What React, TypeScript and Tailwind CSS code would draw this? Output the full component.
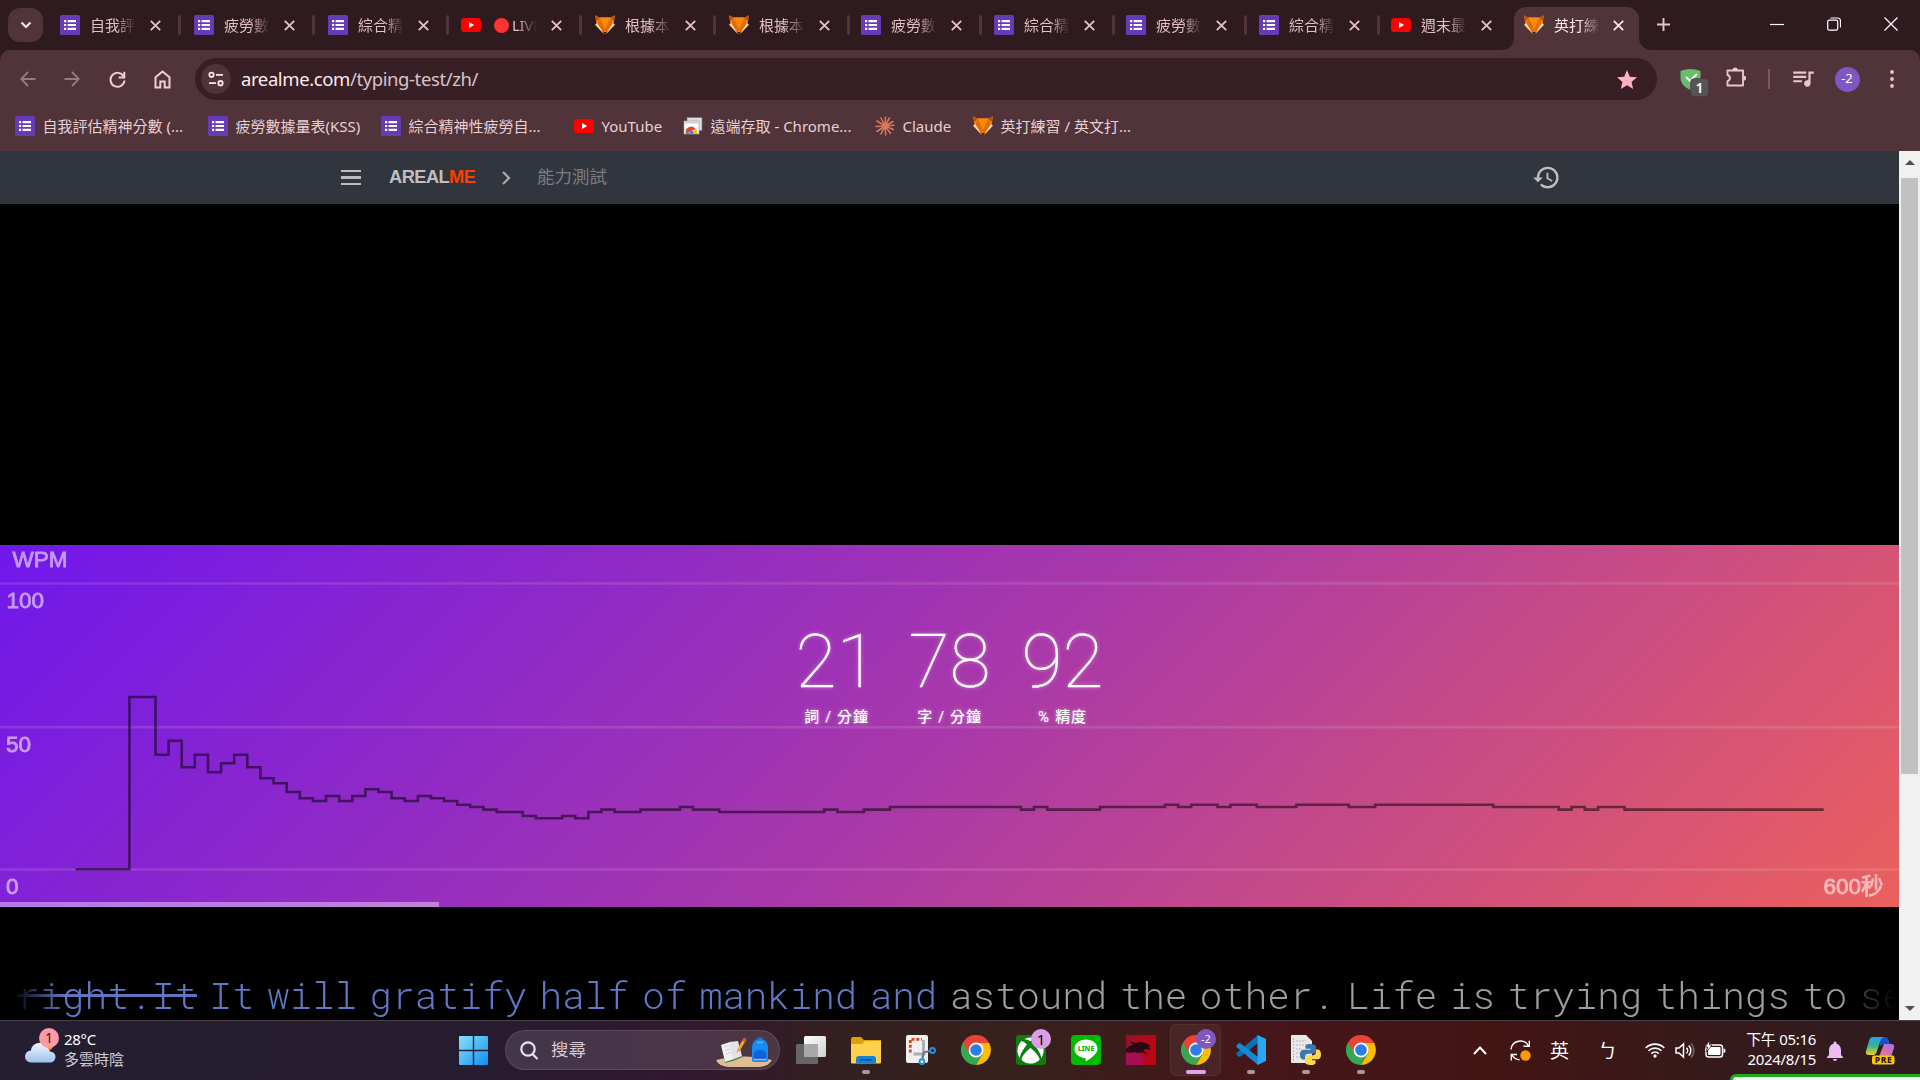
import React from "react";
import { MdHistory, MdQueueMusic, MdStar, MdNotifications } from "react-icons/md";
import { FaXbox } from "react-icons/fa";

const UI = "font-['Noto_Sans','Noto_Sans_CJK_TC',sans-serif]";

type FavKind = "form" | "yt" | "fox" | "remote" | "claude";

function Favicon({ kind }: { kind: FavKind }) {
  if (kind === "form")
    return (
      <svg viewBox="0 0 20 20" className="h-5 w-5 shrink-0">
        <rect width="20" height="20" rx="1.5" fill="#673ab7" />
        <path d="M4 5h2.2v2.2H4zM4 8.9h2.2v2.2H4zM4 12.8h2.2V15H4zM7.6 5H16v2.2H7.6zM7.6 8.9H16v2.2H7.6zM7.6 12.8H16V15H7.6z" fill="#fff" />
      </svg>
    );
  if (kind === "yt")
    return (
      <svg viewBox="0 0 20 20" className="h-5 w-5 shrink-0">
        <rect y="3" width="20" height="14" rx="3.6" fill="#f00" />
        <path d="M8 7l5.2 3L8 13z" fill="#fff" />
      </svg>
    );
  if (kind === "fox")
    return (
      <svg viewBox="0 0 20 20" className="h-5 w-5 shrink-0">
        <path d="M0 .3 4.500 2.500h11L20 .3l-1.500 9.200L10 19.500 1.500 9.500z" fill="#f07c10" />
        <path d="M0 .3 4.500 2.500 1.500 6zM20 .3l-4.500 2.200 3 3.500z" fill="#b9501a" />
        <path d="M4.500 2.500h11L13 11l-3 4-3-4z" fill="#ff8a00" />
        <path d="M0 9.800 2.800 7.500l6 11.500zM20 9.800l-2.800-2.300-6 11.500z" fill="#ffd9a0" />
        <path d="M4.500 2.500 2.500 8.500 9 18.500l1-4.500zM15.500 2.500l2 6-6.500 10-1-4.500z" fill="#e06c08" />
        <path d="m8.300 17 1.700 2.800 1.700-2.800z" fill="#3a1a10" />
      </svg>
    );
  if (kind === "remote")
    return (
      <svg viewBox="0 0 20 20" className="h-5 w-5 shrink-0">
        <rect x="4" y="1.500" width="15" height="13" fill="#ddd" stroke="#777" strokeWidth=".6" />
        <rect x="1" y="5" width="15" height="13" fill="#fff" stroke="#999" strokeWidth=".6" />
        <rect x="1" y="5" width="15" height="2.500" fill="#cfd2d6" />
        <path d="M3 18a5.500 5.500 0 0 1 9.700-5L8.500 15z" fill="#ea4335" />
        <path d="M12.500 12.600A5.500 5.500 0 0 1 14 18H9z" fill="#fbbc05" />
        <path d="M3.400 14.500 7 18H3z" fill="#34a853" />
        <circle cx="8.500" cy="16.600" r="2" fill="#4285f4" />
      </svg>
    );
  return (
    <svg viewBox="0 0 20 20" className="h-5 w-5 shrink-0" stroke="#d97757" strokeWidth="1.600" strokeLinecap="round">
      <path d="M10 10 10.500 1M10 10 14.500 2M10 10 18 5.500M10 10 19 9.300M10 10 18.300 13.500M10 10 15.500 17.500M10 10 10.700 19M10 10 6 18M10 10 2 15.500M10 10 1 10.500M10 10 2 5M10 10 6 2" />
    </svg>
  );
}

function CloseX({ color }: { color: string }) {
  return (
    <svg viewBox="0 0 11 11" className="h-[11px] w-[11px] shrink-0">
      <path d="M.8.8l9.400 9.400M10.200.8.8 10.200" stroke={color} strokeWidth="1.900" />
    </svg>
  );
}

const TABS: { k: FavKind; t: string; w: string; live?: boolean; sep?: boolean }[] = [
  { k: "form", t: "自我評", w: "w-[134px]" },
  { k: "form", t: "疲勞數", w: "w-[134px]" },
  { k: "form", t: "綜合精", w: "w-[133px]" },
  { k: "yt", t: "LIVE", w: "w-[134px]", live: true },
  { k: "fox", t: "根據本", w: "w-[134px]" },
  { k: "fox", t: "根據本", w: "w-[132px]" },
  { k: "form", t: "疲勞數", w: "w-[133px]" },
  { k: "form", t: "綜合精", w: "w-[132px]" },
  { k: "form", t: "疲勞數", w: "w-[133px]" },
  { k: "form", t: "綜合精", w: "w-[132px]" },
  { k: "yt", t: "週末最", w: "w-[123px]", sep: false },
];

function TabLabel({ text, live, active }: { text: string; live?: boolean; active?: boolean }) {
  return (
    <span
      className={
        "ml-[10px] flex w-[45px] items-center overflow-hidden text-[15px] leading-5 whitespace-nowrap [mask-image:linear-gradient(to_right,black_58%,transparent_102%)] " +
        (active ? "text-[#ffe3e8]" : "text-[#e3bfc6]")
      }
    >
      {live && <span className="mr-[3px] ml-[3px] h-[15px] w-[15px] shrink-0 rounded-full bg-[#ff3333]" />}
      <span className={live ? "tracking-[-0.4px]" : ""}>{text}</span>
    </span>
  );
}

function TabStrip() {
  return (
    <div className="flex h-[50px] bg-[#2f1a1f]">
      <div className="mt-2 ml-2 flex h-[34px] w-[35px] items-center justify-center rounded-xl bg-[#50343a]">
        <svg viewBox="0 0 12 8" className="h-2 w-3">
          <path d="M1.500 1.500 6 6l4.500-4.500" stroke="#ffe3e8" strokeWidth="2.200" fill="none" />
        </svg>
      </div>
      <div className="ml-[17px] flex">
        {TABS.map((t, i) => (
          <div key={i} className={"flex items-center " + t.w}>
            <Favicon kind={t.k} />
            <TabLabel text={t.t} live={t.live} />
            <span className="w-[15px]" />
            <CloseX color="#e3bfc6" />
            {t.sep !== false && <span className="ml-[17px] h-5 w-[2.500px] rounded bg-[#50343a]" />}
          </div>
        ))}
      </div>
      <div className="flex w-[10px] items-end">
        <svg viewBox="0 0 12 12" className="-ml-[12px] h-3 w-3 shrink-0">
          <path d="M0 12A12 12 0 0 0 12 0v12z" fill="#50343a" />
        </svg>
      </div>
      <div className="mt-[7px] -ml-[10px] flex h-[43px] w-[125px] items-center rounded-t-[12px] bg-[#50343a] pb-[7px] pl-[10px]">
        <Favicon kind="fox" />
        <TabLabel text="英打練" active />
        <span className="w-[14px]" />
        <CloseX color="#ffe3e8" />
      </div>
      <div className="flex w-[18px] items-end">
        <svg viewBox="0 0 12 12" className="h-3 w-3">
          <path d="M12 12A12 12 0 0 1 0 0v12z" fill="#50343a" />
        </svg>
      </div>
      <svg viewBox="0 0 13 13" className="mt-[18px] h-[13px] w-[13px]">
        <path d="M6.500 0v13M0 6.500h13" stroke="#e8c3ca" strokeWidth="1.900" />
      </svg>
      <div className="mt-[17px] ml-auto flex gap-[43px] pr-[22px]">
        <svg viewBox="0 0 14 14" className="h-[14px] w-[14px]">
          <path d="M0 7.500h14" stroke="#fff" strokeWidth="1.200" />
        </svg>
        <svg viewBox="0 0 14 14" className="h-[14px] w-[14px]" fill="none" stroke="#fff" strokeWidth="1.200">
          <rect x=".7" y="3.200" width="10" height="10" rx="1.600" />
          <path d="M3.500 1h7a3 3 0 0 1 3 3v6.500" />
        </svg>
        <svg viewBox="0 0 14 14" className="h-[14px] w-[14px]">
          <path d="M.5.5l13 13M13.500.5l-13 13" stroke="#fff" strokeWidth="1.200" />
        </svg>
      </div>
    </div>
  );
}

function Toolbar() {
  return (
    <div className="flex h-[58px] items-center rounded-t-[10px] bg-[#50343a]">
      <svg viewBox="0 0 16 16" className="ml-5 h-4 w-4" fill="none" stroke="#957a80" strokeWidth="1.800">
        <path d="M15.500 8H1.500M8 1 1.200 8 8 15" />
      </svg>
      <svg viewBox="0 0 16 16" className="ml-[28px] h-4 w-4" fill="none" stroke="#957a80" strokeWidth="1.800">
        <path d="M.5 8h14M8 1l6.800 7L8 15" />
      </svg>
      <svg viewBox="0 0 17 17" className="ml-[29px] h-[17px] w-[17px]" fill="none" stroke="#f4ccd4" strokeWidth="2">
        <path d="M14.700 5.500A7 7 0 1 0 15.500 9.500" />
        <path d="M15.300.8v5.700H9.600" />
      </svg>
      <svg viewBox="0 0 17 19" className="ml-[28px] h-[19px] w-[17px]" fill="none" stroke="#f4ccd4" strokeWidth="2">
        <path d="M1.500 7.300 8.500 1.500l7 5.800V17.500h-4.800v-6H6.300v6H1.500z" />
      </svg>
      <div className="ml-[24px] flex h-[42px] w-[1462px] items-center rounded-full bg-[#381f25]">
        <span className="ml-[6px] flex h-[30px] w-[30px] items-center justify-center rounded-full bg-[#50343a]">
          <svg viewBox="0 0 16 16" className="h-4 w-4" fill="none" stroke="#ffe3e8" strokeWidth="1.800">
            <circle cx="3.500" cy="3.800" r="2.200" />
            <path d="M8 3.800h7M1 12.200h7" />
            <circle cx="12.500" cy="12.200" r="2.200" />
          </svg>
        </span>
        <span className="ml-[10px] text-[18.500px] tracking-[-0.4px] whitespace-nowrap text-[#d9c3c8]">
          <span className="text-[#ffe8ec]">arealme.com</span>/typing-test/zh/
        </span>
        <MdStar className="mt-[2px] mr-[18px] ml-auto h-[24px] w-[24px] text-[#ffb1c1]" />
      </div>
      <div className="ml-[23px] flex h-[42px] w-[30px] items-start">
        <svg viewBox="0 0 30 30" className="mt-[10px] h-[30px] w-[30px]">
          <path d="M.5 3Q10-1 20.500 3v6c0 6-4 10-10.200 13C4 19 .5 15 .5 9z" fill="#68bc71" />
          <path d="m6 9 4 4 7-7" stroke="#fff" strokeWidth="1.800" fill="none" />
          <rect x="10.500" y="10.500" width="18" height="18" rx="4" fill="#555" stroke="#50343a" strokeWidth=".6" />
          <text x="19.500" y="25" fill="#fff" fontSize="14" fontWeight="600" textAnchor="middle" fontFamily="Noto Sans">1</text>
        </svg>
      </div>
      <svg viewBox="0 0 21 21" className="mb-[3px] ml-[16px] h-[21px] w-[21px] shrink-0">
        <path
          d="M1.500 3.500H17v15H1.500v-4.300a3.200 3.200 0 0 0 0-6.200z"
          fill="none"
          stroke="#eec4cc"
          strokeWidth="1.900"
          strokeLinejoin="round"
        />
        <path d="M6.600 3a2.600 2.600 0 0 1 5.200 0zM17.500 8.500a2.600 2.600 0 0 1 0 5.200z" fill="#eec4cc" />
      </svg>
      <span className="ml-[21px] h-5 w-[1.500px] bg-[#7b5a61]" />
      <MdQueueMusic className="mb-[2px] ml-[20px] h-[26px] w-[26px] shrink-0 text-[#eec4cc]" />
      <span className="ml-[19px] flex h-[25px] w-[25px] shrink-0 items-center justify-center rounded-full bg-[#7e57c2] text-[13px] text-white">-2</span>
      <svg viewBox="0 0 4 18" className="ml-[30px] h-[18px] w-1 shrink-0" fill="#eec4cc">
        <circle cx="2" cy="2" r="1.900" />
        <circle cx="2" cy="9" r="1.900" />
        <circle cx="2" cy="16" r="1.900" />
      </svg>
    </div>
  );
}

const BOOKMARKS: { k: FavKind; t: string; w: string }[] = [
  { k: "form", t: "自我評估精神分數 (...", w: "w-[193px]" },
  { k: "form", t: "疲勞數據量表(KSS)", w: "w-[173px]" },
  { k: "form", t: "綜合精神性疲勞自...", w: "w-[193px]" },
  { k: "yt", t: "YouTube", w: "w-[109px]" },
  { k: "remote", t: "遠端存取 - Chrome...", w: "w-[192px]" },
  { k: "claude", t: "Claude", w: "w-[98px]" },
  { k: "fox", t: "英打練習 / 英文打...", w: "w-[193px]" },
];

function Bookmarks() {
  return (
    <div className="flex h-[43px] items-center bg-[#50343a] pb-[7px] pl-[15px]">
      {BOOKMARKS.map((b) => (
        <div key={b.t} className={"flex items-center gap-[7.500px] text-[15px] leading-5 whitespace-nowrap text-[#e8d0d5] " + b.w}>
          <Favicon kind={b.k} />
          {b.t}
        </div>
      ))}
    </div>
  );
}

function SiteHeader() {
  return (
    <div className="flex h-[53px] items-center bg-[#31353d] font-['Liberation_Sans','Noto_Sans_CJK_TC',sans-serif]">
      <span className="ml-[341px] flex flex-col gap-[4px]">
        <span className="h-[2.500px] w-5 bg-[#bdbdbd]" />
        <span className="h-[2.500px] w-5 bg-[#bdbdbd]" />
        <span className="h-[2.500px] w-5 bg-[#bdbdbd]" />
      </span>
      <span className="mb-[2px] ml-[28px] w-[113px] text-[18.250px] font-bold tracking-[-0.55px] text-[#bfbfbf]">
        AREAL<span className="text-[#ff3d00]">ME</span>
      </span>
      <svg viewBox="0 0 9 14" className="h-[14px] w-[9px]">
        <path d="m1 1 6 6-6 6" fill="none" stroke="#aaa" strokeWidth="2.200" />
      </svg>
      <span className="ml-[26px] text-[17.500px] text-[#7b7d81]">能力測試</span>
      <MdHistory className="mr-[338px] ml-auto h-[29px] w-[29px] text-[#bfbfbf]" />
    </div>
  );
}

/* Each entry is the right edge of a step and its height, in chart pixels. */
const STEPS: [number, number][] = [
  [129.4, 324.3], [155.5, 152], [168.6, 209.7], [181.7, 195.7], [194.8, 222.3], [208, 209.7], [221.1, 227.3],
  [234.2, 218.3], [247.3, 209.7], [260.4, 222.3], [273.6, 233.3], [286.7, 238.3], [299.8, 247], [312.9, 253.3],
  [326, 256], [339.2, 251], [352.3, 256], [365.4, 251], [378.5, 244.3], [391.6, 247], [404.7, 253.3], [417.9, 256],
  [431, 251], [444.1, 253.3], [457.2, 256], [470.3, 259.7], [483.5, 262], [496.6, 264.6], [522.8, 267], [535.9, 271],
  [562.2, 273.3], [575.3, 271], [588.4, 273.3], [601.5, 267], [614.6, 264.6], [640.5, 267], [679.9, 264.6],
  [693, 262], [719.2, 264.6], [824, 267], [837.4, 264.6], [863.9, 267], [890, 264.6], [1021, 262], [1034, 264.6],
  [1047.3, 262], [1100, 264.6], [1165, 262], [1178.2, 259.7], [1191.3, 262], [1217.5, 259.7], [1230.4, 262],
  [1256.8, 259.7], [1296.3, 262], [1348.7, 259.7], [1375.1, 262], [1493.3, 259.7], [1558.8, 262], [1571.6, 264.6],
  [1584.8, 262], [1598, 264.6], [1624.5, 262], [1823.7, 264.6],
];
const STEP_PATH = "M75.500 " + STEPS.map(([x, y], i) => (i ? "V" : "") + y + "H" + x).join("");

const STATS = [
  { n: "21", l: "詞 / 分鐘" },
  { n: "78", l: "字 / 分鐘" },
  { n: "92", l: "% 精度" },
];

function Chart() {
  return (
    <div className="relative h-[362px] overflow-hidden bg-[linear-gradient(135deg,#7017ec_0%,#a838aa_50%,#eb605d_100%)]">
      <svg viewBox="0 0 1899 362" className="absolute inset-0 h-[362px] w-[1899px]">
        <path d="M0 38.500H1899M0 182.300H1899M0 324.500H1899" stroke="#fff" strokeOpacity=".12" strokeWidth="2.500" />
        <path d={STEP_PATH} fill="none" stroke="#000" strokeOpacity=".52" strokeWidth="2.600" />
        <g fill="#fff" opacity=".56" stroke="#fff" strokeWidth=".8" fontSize="22.500" fontFamily="Liberation Sans, Noto Sans CJK TC, sans-serif">
          <text x="12.500" y="22.300">WPM</text>
          <text x="6.500" y="63">100</text>
          <text x="6" y="206.500">50</text>
          <text x="6" y="348.800">0</text>
          <text x="1823.500" y="348.800">600秒</text>
        </g>
      </svg>
      <div className="absolute bottom-0 left-0 h-[5px] w-[439px] bg-white/40" />
      <div className="relative flex justify-center pt-[72px] text-white">
        {STATS.map((s) => (
          <div key={s.l} className="flex w-[113px] flex-col items-center [text-shadow:0_0_4px_rgba(255,255,255,0.45)]">
            <span className="font-['Roboto'] text-[75px] leading-[88px] font-thin [-webkit-text-stroke:0.3px_white]">{s.n}</span>
            <span className="mt-[1px] font-['Roboto','Noto_Sans_CJK_TC',sans-serif] text-[15px] leading-[22px] font-medium tracking-[0.9px] [word-spacing:0.5px]">
              {s.l}
            </span>
          </div>
        ))}
      </div>
    </div>
  );
}

function TypingLine() {
  return (
    <div className="h-[113px] overflow-hidden bg-black pt-[63px] [mask-image:linear-gradient(to_right,transparent_0,transparent_12px,black_64px,black_1840px,rgba(0,0,0,0.35)_1864px,transparent_1897px)]">
      <div className="-ml-[18px] font-['Roboto_Mono','Liberation_Mono',monospace] text-[37.500px] leading-[50px] font-light [word-spacing:-10px] whitespace-pre text-[#9e9e9e]">
        <span className="text-[#6079c6]">
          s <span className="bg-[linear-gradient(#5f74bd,#5f74bd)] bg-[length:100%_3px] bg-[position:0_24px] bg-no-repeat">right.It</span>
          {" It will gratify half of mankind and "}
        </span>
        astound the other. Life is trying things to se
      </div>
    </div>
  );
}

function ScrollBar() {
  return (
    <div className="flex w-[21px] flex-col items-center bg-[#f1f1f1]">
      <svg viewBox="0 0 10 5" className="mt-[9px] h-[5px] w-[10px]">
        <path d="M0 5 5 0l5 5z" fill="#505050" />
      </svg>
      <div className="mt-[13px] h-[596px] w-[17px] bg-[#c1c1c1]" />
      <svg viewBox="0 0 10 5" className="mt-auto mb-[9px] h-[5px] w-[10px]">
        <path d="M0 0l5 5 5-5z" fill="#505050" />
      </svg>
    </div>
  );
}

function ChromeLogo() {
  return (
    <svg viewBox="0 0 30 30" className="h-[30px] w-[30px]">
      <path d="M15 15 2 7.500A15 15 0 0 0 15 30l6.500-11.200z" fill="#34a853" />
      <path d="M15 8h13.200A15 15 0 0 1 15 30l6.500-11.200z" fill="#fbbc05" />
      <path d="M2 7.500 8.800 19 15 8h13.200L28 7.500A15 15 0 0 0 2 7.500z" fill="#ea4335" />
      <circle cx="15" cy="15" r="7.400" fill="#fff" />
      <circle cx="15" cy="15" r="5.800" fill="#2b7de9" />
    </svg>
  );
}

function AppSlot({
  children,
  dot,
  badge,
  badgeClass,
  active,
}: {
  children: React.ReactNode;
  dot?: boolean;
  badge?: string;
  badgeClass?: string;
  active?: boolean;
}) {
  return (
    <div className={"relative mx-[3px] flex h-[50px] w-[49px] flex-col items-center rounded-md pt-[10px] " + (active ? "bg-white/5 ring-1 ring-white/10" : "")}>
      {children}
      {badge && (
        <span className={"absolute top-[4px] right-[4px] flex h-[20px] w-[20px] items-center justify-center rounded-full " + badgeClass}>{badge}</span>
      )}
      {active ? (
        <span className="mt-[5px] h-1 w-5 rounded-full bg-[#e3a3ea]" />
      ) : dot ? (
        <span className="mt-[5px] h-1 w-2 rounded-full bg-[#a79a9a]" />
      ) : null}
    </div>
  );
}

function Apps() {
  return (
    <div className="ml-[3px] flex pt-[4px]">
      <AppSlot>
        <svg viewBox="0 0 30 30" className="h-[30px] w-[30px]">
          <defs>
            <linearGradient id="tv" x1="0" y1="0" x2="1" y2="1">
              <stop offset="0" stopColor="#fff" />
              <stop offset="1" stopColor="#d0d0d0" />
            </linearGradient>
          </defs>
          <rect y="9" width="22" height="20" rx="1.500" fill="#666" />
          <rect x="8" y="1" width="22" height="21" rx="1.500" fill="url(#tv)" />
          <path d="M8 9h14v13H8z" fill="#a8a8a8" />
        </svg>
      </AppSlot>
      <AppSlot dot>
        <svg viewBox="0 0 30 30" className="h-[30px] w-[30px]">
          <path d="M0 4q0-2 2-2h8l3 3H30v8H0z" fill="#dd9f0c" />
          <path d="M0 9h11l3-3h15q1 0 1 1v20.500q0 1-1 1H1q-1 0-1-1z" fill="#ffd04c" />
          <path d="M5 28.500V24q0-3 3-3h14q3 0 3 3v4.500z" fill="#1583d0" />
          <path d="M9 24.800h12" stroke="#0a4f87" strokeWidth="1.500" />
        </svg>
      </AppSlot>
      <AppSlot>
        <svg viewBox="0 0 30 30" className="h-[30px] w-[30px]">
          <rect width="22" height="28" rx="2" fill="#f0f0f0" />
          <path d="M4.300 17.500V4.300H16" fill="none" stroke="#e0431c" strokeWidth="2.800" strokeDasharray="3 1.800" />
          <path d="M7.500 19h12M17.500 5v14.500" stroke="#a9aeb4" strokeWidth="2.800" />
          <path d="m17 17.500 7.500-1.500M17.500 18l-1.300 6.500" stroke="#6d7780" strokeWidth="2.200" />
          <circle cx="26.500" cy="15.500" r="2.500" fill="none" stroke="#1f95dd" strokeWidth="1.900" />
          <circle cx="16" cy="26.700" r="2.400" fill="none" stroke="#1f95dd" strokeWidth="1.900" />
        </svg>
      </AppSlot>
      <AppSlot>
        <ChromeLogo />
      </AppSlot>
      <AppSlot badge="1" badgeClass="bg-[#dd9ce6] text-black text-[15px]">
        <span className="flex h-[30px] w-[30px] items-center justify-center rounded-[3px] bg-[#107c10]">
          <FaXbox className="h-[27px] w-[27px] text-white" />
        </span>
      </AppSlot>
      <AppSlot>
        <svg viewBox="0 0 30 30" className="h-[30px] w-[30px]">
          <rect width="30" height="30" rx="4" fill="#00b900" />
          <path d="M15 4.500c6.500 0 11.500 4 11.500 9.300 0 4.700-6 9.200-11 12.200-1 .5-1-.5-.8-2.700C8.500 23 3.500 19 3.500 13.800 3.500 8.500 8.500 4.500 15 4.500z" fill="#fff" />
          <text x="15" y="16.300" fontSize="7" fontWeight="800" textAnchor="middle" fill="#00b900" fontFamily="Noto Sans">LINE</text>
        </svg>
      </AppSlot>
      <AppSlot>
        <svg viewBox="0 0 30 30" className="h-[30px] w-[30px]">
          <defs>
            <linearGradient id="dr" x1="0" y1="0" x2="1" y2="0">
              <stop offset="0" stopColor="#98102a" />
              <stop offset="1" stopColor="#c00510" />
            </linearGradient>
          </defs>
          <rect width="30" height="30" fill="url(#dr)" />
          <path d="M0 16q9-2 14 3 4 4 3 11H0z" fill="#a80c52" />
          <path d="M0 14q2-3 7-4L4 7l7 1 4-1 7 2 3 3-3 0 3 3-5-1-3 1 5 5-6-3-4 1-4-1-4 1-4-1z" fill="#260a12" />
        </svg>
      </AppSlot>
      <AppSlot active badge="-2" badgeClass="bg-[#7e57c2] text-white text-[11px]">
        <ChromeLogo />
      </AppSlot>
      <AppSlot dot>
        <svg viewBox="0 0 30 30" className="h-[30px] w-[30px]">
          <path d="M22 0v8L4 22l-1.500-.5L.5 19.500V18z" fill="#0a70b8" />
          <path d="M22 30v-8L4 8l-1.500.5L.5 10.500V12z" fill="#1489d6" />
          <path d="M21.500 0 30 4v22l-8.500 4z" fill="#29a8f0" />
        </svg>
      </AppSlot>
      <AppSlot dot>
        <svg viewBox="0 0 30 30" className="h-[30px] w-[30px]">
          <path d="M0 1q0-1 1-1h14l6 6v22H1q-1 0-1-1z" fill="#e9e9e9" />
          <path d="M2.500 3v24M5 6h10M5 10h13M5 14h6M5 18h5M5 22h5" stroke="#b5b5b5" strokeDasharray="2 1" />
          <path
            transform="translate(9 9) scale(.21)"
            d="M49 0C25 0 26 11 26 11v12h24v4H17S0 25 0 50s15 24 15 24h9V62s0-15 15-15h23s14 0 14-14V14S78 0 49 0z"
            fill="#3a78ad"
          />
          <path
            transform="translate(9 9) scale(.21)"
            d="M51 100c24 0 23-11 23-11V77H50v-4h33s17 2 17-23-15-24-15-24h-9v12s0 15-15 15H38s-14 0-14 14v19s-2 14 27 14z"
            fill="#ffd845"
          />
        </svg>
      </AppSlot>
      <AppSlot dot>
        <ChromeLogo />
      </AppSlot>
    </div>
  );
}

function Tray() {
  return (
    <div className="relative ml-auto flex h-[59px] items-center text-white">
      <svg viewBox="0 0 14 9" className="h-[9px] w-[14px]">
        <path d="m1 8 6-6.500L13 8" stroke="#fff" strokeWidth="2" fill="none" />
      </svg>
      <svg viewBox="0 0 21 21" className="ml-[23px] h-[21px] w-[21px]" fill="none" stroke="#fff" strokeWidth="1.400">
        <path d="M1 9.500A9.300 9.300 0 0 1 18.500 6M19.300.8V6.300H13.500M9.500 19.800A9.300 9.300 0 0 1 1.800 14.500M1.300 20.500v-6H7" />
        <circle cx="15.500" cy="15.500" r="5.200" fill="#ff9800" stroke="none" />
      </svg>
      <span className="ml-[19px] w-[20px] font-['Noto_Sans_CJK_TC'] text-[19px]">英</span>
      <span className="ml-[28px] w-[21px] font-['Noto_Sans_CJK_TC'] text-[19px]">ㄅ</span>
      <svg viewBox="0 0 20 16" className="mb-px ml-[26px] h-[16px] w-[20px]" fill="none" stroke="#fff" strokeWidth="1.600">
        <path d="M.7 6a13 13 0 0 1 18.600 0M3.500 8.800a9.200 9.200 0 0 1 13 0M6.300 11.600a5.200 5.200 0 0 1 7.400 0" />
        <circle cx="10" cy="14" r="1.700" fill="#fff" stroke="none" />
      </svg>
      <svg viewBox="0 0 20 16" className="mb-px ml-[10px] h-[17px] w-[20px]" fill="none" stroke="#fff" strokeWidth="1.500">
        <path d="M1 5.500v5h3l4.500 4V1.500L4 5.500zM11.500 5.200a4 4 0 0 1 0 5.600M13.700 3a7 7 0 0 1 0 10" />
        <path d="M16 1a10 10 0 0 1 0 14" stroke="#806a6a" />
      </svg>
      <svg viewBox="0 0 21 17" className="mb-[3px] ml-[10px] h-[17px] w-[21px] overflow-visible">
        <rect x="1" y="4" width="16.500" height="12" rx="2.500" fill="none" stroke="#fff" strokeWidth="1.500" />
        <rect x="3" y="6" width="12.500" height="8" rx="1" fill="#fff" />
        <path d="M18.500 7.500q2 0 2 2.300t-2 2.200z" fill="#fff" />
        <path d="M4.500-.5 0 6h2.500L1.500 11 7 4H4.500z" fill="#fff" stroke="#3a1815" strokeWidth=".8" />
      </svg>
      <div className="-mt-[3px] ml-[10px] w-[80px] text-right text-[15px] leading-5 tracking-[-0.3px] whitespace-nowrap">
        <div>下午 05:16</div>
        <div>2024/8/15</div>
      </div>
      <MdNotifications className="ml-[7px] h-[24px] w-[24px] text-[#eebcf2]" />
      <svg viewBox="0 0 30 30" className="mr-[25px] mb-[2px] ml-[18px] h-[30px] w-[30px]">
        <defs>
          <linearGradient id="ca" x1="0" y1="0" x2="0" y2="1">
            <stop offset="0" stopColor="#2a9df4" />
            <stop offset=".5" stopColor="#35b58a" />
            <stop offset="1" stopColor="#f0d020" />
          </linearGradient>
          <linearGradient id="cb" x1="1" y1="0" x2="0" y2="1">
            <stop offset="0" stopColor="#a86cf8" />
            <stop offset="1" stopColor="#ff7a60" />
          </linearGradient>
        </defs>
        <path d="M15 2h5q3 0 4 4l1 3h-6l-4 2z" fill="#1a4fc8" />
        <path d="M8 2h11q-3 1-4 5l-3 9q-1 4-4 4H4q-4 0-3-4L4 6q1-4 4-4z" fill="url(#ca)" />
        <path d="M19 9h7q4 0 3 4l-2 6q-1 5-5 5H11q3-1 4-5z" fill="url(#cb)" />
        <rect x="7" y="20.500" width="22.500" height="9" rx="2" fill="#ffc400" />
        <text x="18.500" y="28.200" fontSize="8.500" fontWeight="800" textAnchor="middle" letterSpacing=".6" fill="#1a1a1a" fontFamily="Noto Sans">PRE</text>
      </svg>
    </div>
  );
}

function Taskbar() {
  return (
    <div className="relative flex h-[60px] overflow-hidden border-t border-[#4b4248] bg-[linear-gradient(to_right,#251e30_0%,#261c30_24%,#33182f_36%,#33201f_44%,#38201c_54%,#45161a_66%,#421513_78%,#38191a_87%,#2f1c20_100%)]">
      <svg viewBox="0 0 36 40" className="mt-[6px] ml-[25px] h-[40px] w-[36px]">
        <defs>
          <linearGradient id="cl" x1="0" y1="0" x2="0" y2="1">
            <stop offset="0" stopColor="#f0f6ff" />
            <stop offset="1" stopColor="#9dc0ee" />
          </linearGradient>
        </defs>
        <circle cx="23" cy="18.500" r="5" fill="#ff8a00" />
        <path d="M6 35.500a6 6 0 0 1 0-12 8.500 8.500 0 0 1 16-3A6 6 0 0 1 25 24.500a5.500 5.500 0 0 1 0 11z" fill="url(#cl)" />
        <circle cx="24" cy="11" r="10" fill="#ff9aa5" />
        <text x="24" y="16" fontSize="14" textAnchor="middle" fill="#222" fontFamily="Noto Sans">1</text>
      </svg>
      <div className="mt-[8px] ml-[3px] w-[120px] text-[15px] leading-5 text-white">
        <div className="tracking-[-0.3px]">28°C</div>
        <div className="text-[#d0ccd2]">多雲時陰</div>
      </div>
      <svg viewBox="0 0 29 29" className="mt-[15px] ml-[275px] h-[29px] w-[29px]">
        <defs>
          <linearGradient id="win" x1="0" y1="0" x2="1" y2="1">
            <stop offset="0" stopColor="#86e2fb" />
            <stop offset="1" stopColor="#0f8ff0" />
          </linearGradient>
        </defs>
        <path
          d="M1 0h12.800v13.800H0V1q0-1 1-1zM15.200 0H28q1 0 1 1v12.800H15.200zM0 15.200h13.800V29H1q-1 0-1-1zM15.200 15.200H29V28q0 1-1 1H15.200z"
          fill="url(#win)"
        />
      </svg>
      <div className="mt-[9px] ml-[17px] flex h-10 w-[275px] items-center rounded-full bg-white/12 ring-1 ring-white/10 ring-inset">
        <svg viewBox="0 0 19 19" className="ml-[15px] h-[19px] w-[19px]" fill="none" stroke="#e8e0ec" strokeWidth="2.200">
          <circle cx="8" cy="8" r="6.700" />
          <path d="m12.500 13 5 5" />
        </svg>
        <span className="mb-px ml-[12px] text-[17.500px] text-[#d3c8d3]">搜尋</span>
        <svg viewBox="0 0 58 32" className="mt-[3px] mr-[7px] ml-auto h-[32px] w-[58px]">
          <path d="M1 24Q30 17 57 24q-4 7-14 7H15Q4 31 1 24z" fill="#e2bd92" />
          <path d="m7 10 3-2 18 13-10 4-8 2z" fill="#3d8a4a" />
          <path d="m6 9 9-3 4 17-9 3z" fill="#f4f2f0" />
          <path d="m14 6 9-1 4 15-9 3.500z" fill="#e4e1ea" />
          <path d="M9 11l5-1.500M10 14.500l5-1.500M11 18l5-1.500" stroke="#c0bccb" strokeWidth=".8" />
          <path d="m22 14 5.500-10 2.800 1.500-5.800 9.500-2.800 2z" fill="#f5a623" />
          <circle cx="29.500" cy="4" r="2" fill="#e0553c" />
          <path d="M42 3q3-3 6 0" stroke="#1565c0" strokeWidth="2" fill="none" />
          <path d="M37 12q0-9 8-9t8 9v12q0 2-2 2H39q-2 0-2-2z" fill="#1989f5" />
          <path d="M39 18q0-4 6-4t6 4v5H39z" fill="#0d63d0" />
          <path d="M38.500 23.500h13" stroke="#c79bff" strokeWidth="1.500" />
          <path d="M42 6.500h6" stroke="#5fb6ff" strokeWidth="1.500" />
        </svg>
      </div>
      <Apps />
      <Tray />
      <div className="absolute top-[53px] right-[-10px] h-5 w-[200px] rounded-tl-[6px] border-[3px] border-[#1faa1f] bg-[#f4f4f4]" />
    </div>
  );
}

export default function App() {
  return (
    <div className={"flex h-[1080px] w-[1920px] flex-col overflow-hidden bg-black " + UI}>
      <div className="bg-[#2f1a1f]">
        <TabStrip />
        <Toolbar />
        <Bookmarks />
      </div>
      <div className="flex h-[869px]">
        <div className="w-[1899px] bg-black">
          <SiteHeader />
          <div className="h-[341px]" />
          <Chart />
          <TypingLine />
        </div>
        <ScrollBar />
      </div>
      <Taskbar />
    </div>
  );
}
